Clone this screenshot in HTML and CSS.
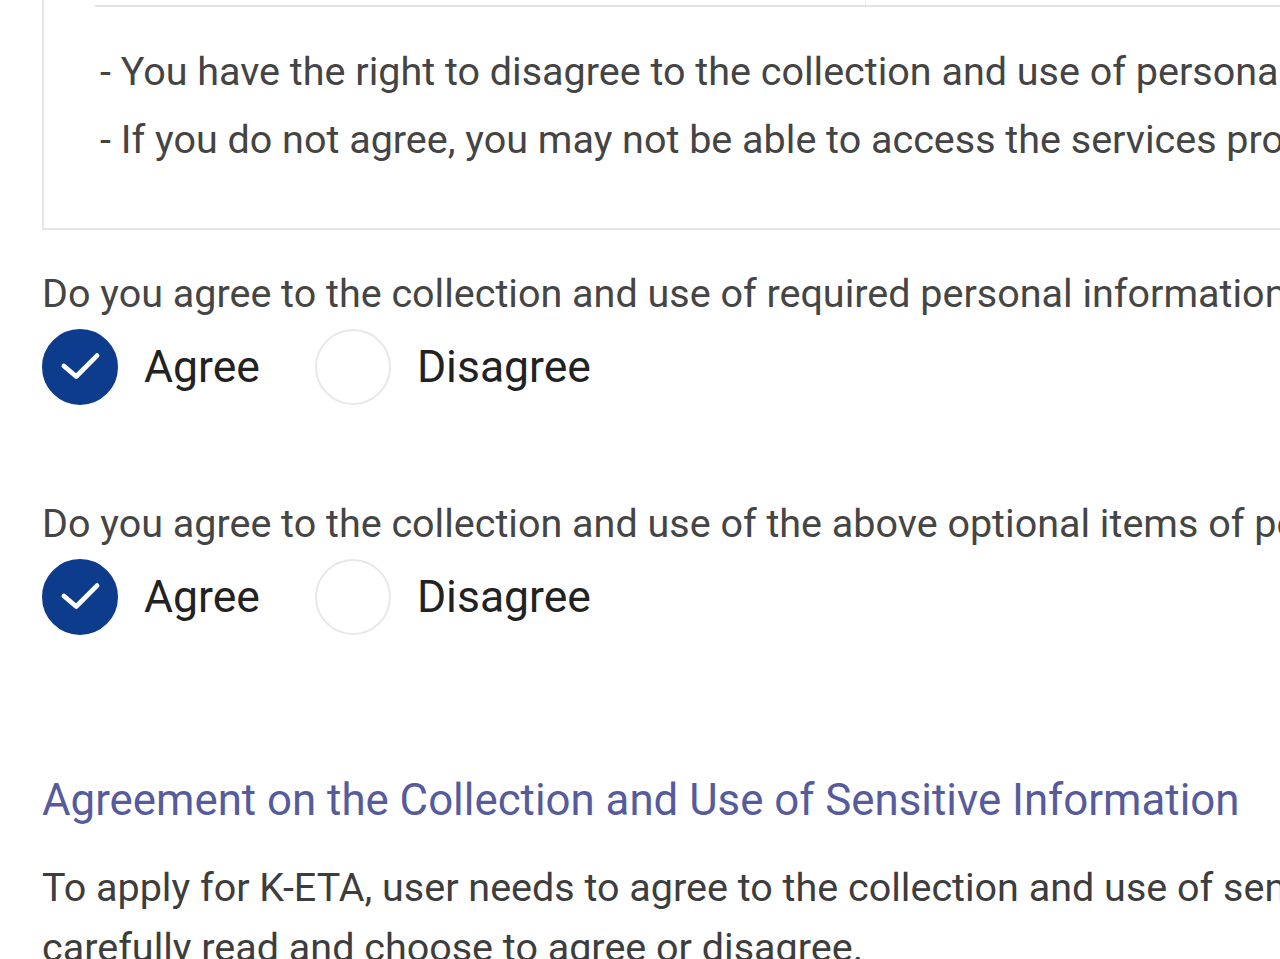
FILE: index.html
```html
<!DOCTYPE html>
<html lang="en">
<head>
<meta charset="utf-8">
<title>K-ETA Agreement</title>
<link rel="stylesheet" href="styles.css">
</head>
<body>
<div class="page">
  <div class="box">
    <div class="table-end">
      <div class="cell cell-first"></div>
      <div class="cell"></div>
    </div>
    <ul class="notes">
      <li>- You have the right to disagree to the collection and use of personal information.</li>
      <li>- If you do not agree, you may not be able to access the services provided.</li>
    </ul>
  </div>

  <p class="question q-first">Do you agree to the collection and use of required personal information?</p>
  <div class="options">
    <span class="option">
      <span class="radio checked"><svg viewBox="0 0 76 76" width="76" height="76"><path d="M21 37 L34 48 L56 26" fill="none" stroke="#fff" stroke-width="5" stroke-linecap="round" stroke-linejoin="round"/></svg></span>
      <span class="label">Agree</span>
    </span>
    <span class="option">
      <span class="radio"></span>
      <span class="label">Disagree</span>
    </span>
  </div>

  <p class="question q-second">Do you agree to the collection and use of the above optional items of personal information?</p>
  <div class="options">
    <span class="option">
      <span class="radio checked"><svg viewBox="0 0 76 76" width="76" height="76"><path d="M21 37 L34 48 L56 26" fill="none" stroke="#fff" stroke-width="5" stroke-linecap="round" stroke-linejoin="round"/></svg></span>
      <span class="label">Agree</span>
    </span>
    <span class="option">
      <span class="radio"></span>
      <span class="label">Disagree</span>
    </span>
  </div>

  <h2 class="section-title">Agreement on the Collection and Use of Sensitive Information</h2>
  <p class="para">To apply for K-ETA, user needs to agree to the collection and use of sensitive information. Please<br>carefully read and choose to agree or disagree.</p>
</div>
</body>
</html>
```

FILE: styles.css
```css
html, body {
  margin: 0;
  padding: 0;
  background: #ffffff;
  overflow: hidden;
}

body {
  font-family: Roboto, "Liberation Sans", sans-serif;
  color: #3a3a3a;
}

.page {
  width: 2000px;
  padding-left: 42px;
  margin-top: -80px;
}

.box {
  border: 2px solid #e6e6e6;
  border-top: none;
  background: #fff;
}

.table-end {
  display: flex;
  margin-left: 51px;
  height: 85px;
  border-bottom: 2px solid #e2e2e2;
}

.cell {
  flex: 1;
}

.cell-first {
  flex: 0 0 770px;
  border-right: 1px solid #ececec;
}

.notes {
  list-style: none;
  margin: 0;
  padding: 31px 0 54px 56px;
  font-size: 39.5px;
  line-height: 68px;
  color: #444;
  white-space: nowrap;
}

.question {
  margin: 0;
  font-size: 39.5px;
  line-height: 48px;
  color: #454545;
  white-space: nowrap;
}

.q-first {
  margin-top: 40px;
}

.q-second {
  margin-top: 95px;
}

.options {
  display: flex;
  align-items: center;
  gap: 55px;
  margin-top: 11px;
  height: 76px;
}

.option {
  display: flex;
  align-items: center;
  gap: 26px;
}

.radio {
  width: 76px;
  height: 76px;
  box-sizing: border-box;
  border-radius: 50%;
  border: 2px solid #e8e8e8;
  display: flex;
  align-items: center;
  justify-content: center;
  flex: none;
}

.radio svg {
  display: block;
}

.radio.checked {
  background: #0e3c8c;
  border-color: #0e3c8c;
}

.label {
  font-size: 44.5px;
  color: #222;
  line-height: 52px;
}

.section-title {
  margin: 137px 0 0;
  font-size: 43.8px;
  font-weight: 400;
  line-height: 56px;
  color: #555b9c;
  white-space: nowrap;
}

.para {
  margin: 30px 0 0;
  font-size: 39.5px;
  line-height: 60px;
  color: #3d3d3d;
  white-space: nowrap;
}
```
